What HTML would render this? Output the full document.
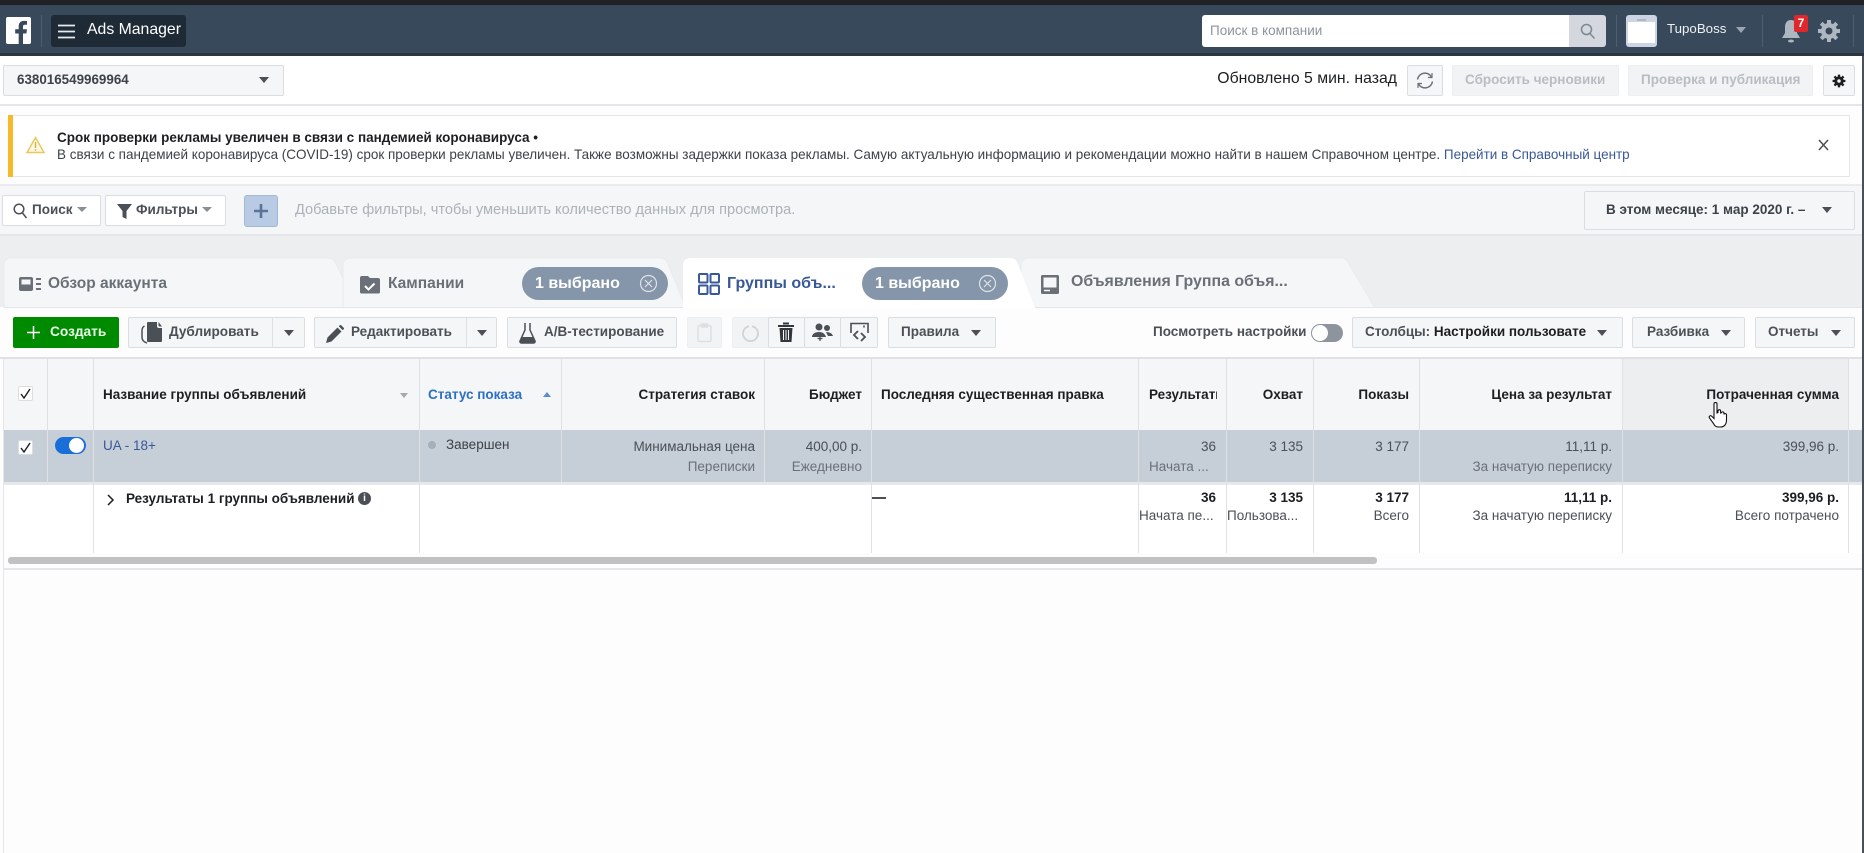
<!DOCTYPE html>
<html lang="ru"><head><meta charset="utf-8"><title>Ads Manager</title>
<style>
html,body{margin:0;padding:0;background:#fdfdfd}
#p{position:relative;width:1864px;height:853px;overflow:hidden;background:#fdfdfd;font-family:"Liberation Sans","Noto Sans CJK SC",sans-serif;font-size:14px;color:#4b4f56}
#p div,#p svg,#p span.a{position:absolute}
.t{white-space:nowrap;line-height:20px;height:20px}
.b{font-weight:bold}
.d{color:#1c1e21}
.g{color:#6b7078}
.btn{background:#f5f6f7;border:1px solid #dadde1;border-radius:2px;box-sizing:border-box}
.w{background:#fff;border:1px solid #dadde1;border-radius:2px;box-sizing:border-box}
.dis{background:#f2f3f5;border:1px solid #eceef0;border-radius:2px;box-sizing:border-box}
.car{width:0;height:0;margin-left:1px;border-left:5px solid transparent;border-right:5px solid transparent;border-top:6px solid #4b4f56}
.v{width:1px;background:#dfe1e5}
.pill{background:#8596aa;border-radius:17px;height:33px;color:#fff;font-weight:bold;font-size:16px;line-height:33px}
</style></head><body>
<div id="p">
<!-- top bars -->
<div style="left:0;top:0;width:1864px;height:5px;background:#1f2124"></div>
<div style="left:0;top:5px;width:1864px;height:49px;background:#37495a"></div>
<div style="left:0;top:53px;width:1864px;height:3px;background:#2b3641"></div>
<svg style="left:6px;top:17px" width="25" height="27" viewBox="0 0 25 27"><rect width="25" height="27" rx="2" fill="#fff"/><path d="M17 27V16.500h3.400l.6-4.200h-4V9.800c0-1.200.4-2 2.100-2H21V4.100c-.4-.1-1.700-.2-3.100-.2-3.100 0-5.200 1.900-5.200 5.300v3.100H9.200v4.200h3.500V27z" fill="#37495a"/></svg>
<div class="v" style="left:41px;top:15px;height:32px;background:#4c5e70"></div>
<div style="left:51px;top:15px;width:135px;height:32px;background:#1e2a36;border-radius:3px"></div>
<svg style="left:58px;top:24px" width="17" height="15"><path d="M0 1.500h17M0 7.500h17M0 13.500h17" stroke="#e6e9ed" stroke-width="1.800"/></svg>
<div class="t" style="left:87px;top:20px;color:#fff;font-size:15.800px">Ads Manager</div>
<!-- search -->
<div style="left:1202px;top:15px;width:371px;height:32px;background:#fff;border-radius:3px 0 0 3px"></div>
<div style="left:1569px;top:15px;width:37px;height:32px;background:#d4d8de;border-radius:0 3px 3px 0"></div>
<svg style="left:1580px;top:23px" width="16" height="17" fill="none" stroke="#7d8895" stroke-width="1.500"><circle cx="6.500" cy="6.500" r="5"/><path d="M10 10.500l4.500 5"/></svg>
<div class="t" style="left:1210px;top:21px;color:#8d949e;font-size:13.500px">Поиск в компании</div>
<div class="v" style="left:1616px;top:15px;height:32px;background:#4c5e70"></div>
<div style="left:1626px;top:15px;width:31px;height:32px;background:#cdd5e3;border-radius:3px"></div>
<div style="left:1628px;top:22px;width:27px;height:21px;background:#fff"></div>
<div style="left:1637px;top:19px;width:9px;height:2px;background:#b0b7c2"></div>
<div class="t" style="left:1667px;top:19px;color:#eef1f4;font-size:13.300px">TupoBoss</div>
<div class="car" style="left:1735px;top:27px;border-top-color:#9aa5b1"></div>
<div class="v" style="left:1762px;top:15px;height:32px;background:#4c5e70"></div>
<svg style="left:1780px;top:18px" width="22" height="26" viewBox="0 0 22 26"><path d="M11 2c4 0 6 3 6 7v6l3 5H2l3-5V9c0-4 2-7 6-7z" fill="#aeb6bf"/><ellipse cx="11" cy="23" rx="3" ry="1.500" fill="#aeb6bf"/></svg>
<div style="left:1794px;top:15px;width:14px;height:17px;background:#e0282c;border-radius:2px;color:#fff;font-size:12px;line-height:17px;text-align:center;font-weight:bold">7</div>
<svg style="left:1817px;top:19px" width="24" height="24" viewBox="0 0 24 24"><path d="M12 4a8 8 0 1 0 0 16 8 8 0 0 0 0-16zm0 4.500a3.500 3.500 0 1 1 0 7 3.500 3.500 0 0 1 0-7z" fill="#aeb6bf" fill-rule="evenodd"/><path d="M12 1v5M12 18v5M1 12h5M18 12h5M4.200 4.200l3.500 3.500M16.300 16.300l3.500 3.500M4.200 19.800l3.500-3.500M16.300 7.700l3.500-3.500" stroke="#aeb6bf" stroke-width="4"/></svg>
<div class="v" style="left:1853px;top:15px;height:32px;background:#4c5e70"></div>

<!-- account row -->
<div style="left:0;top:56px;width:1864px;height:49px;background:#fff"></div>
<div style="left:0;top:104px;width:1864px;height:2px;background:#e4e6ea"></div>
<div class="btn" style="left:3px;top:65px;width:281px;height:31px"></div>
<div class="t b" style="left:17px;top:70px;color:#3d4148;font-size:13.400px">638016549969964</div>
<div class="car" style="left:258px;top:77px"></div>
<div class="t d" style="right:467px;top:69px;font-size:15.800px">Обновлено 5 мин. назад</div>
<div class="btn" style="left:1407px;top:65px;width:36px;height:31px"></div>
<svg style="left:1416px;top:72px" width="18" height="17" fill="none" stroke="#6b7078" stroke-width="1.500"><path d="M15.500 5A7.500 7.500 0 0 0 1.500 7.500M2.500 12A7.500 7.500 0 0 0 16.500 9.500"/><path d="M16 1v4.500h-4M2 16v-4.500h4" stroke-width="1.200"/></svg>
<div class="dis" style="left:1452px;top:65px;width:167px;height:31px"></div>
<div class="t b" style="left:1465px;top:70px;color:#b9bdc3;font-size:13.500px">Сбросить черновики</div>
<div class="dis" style="left:1628px;top:65px;width:185px;height:31px"></div>
<div class="t b" style="left:1641px;top:70px;color:#b9bdc3;font-size:13.500px">Проверка и публикация</div>
<div class="btn" style="left:1823px;top:65px;width:32px;height:31px"></div>
<svg style="left:1832px;top:74px" width="14" height="14" viewBox="0 0 24 24"><path d="M12 4a8 8 0 1 0 0 16 8 8 0 0 0 0-16zm0 5a3 3 0 1 1 0 6 3 3 0 0 1 0-6z" fill="#1c1e21" fill-rule="evenodd"/><path d="M12 1v5M12 18v5M1 12h5M18 12h5M4.200 4.200l3.500 3.500M16.300 16.300l3.500 3.500M4.200 19.800l3.500-3.500M16.300 7.700l3.500-3.500" stroke="#1c1e21" stroke-width="4"/></svg>

<!-- banner -->
<div style="left:0;top:106px;width:1864px;height:78px;background:#fdfdfd"></div>
<div style="left:8px;top:115px;width:1842px;height:62px;background:#fff;border:1px solid #e4e6ea;box-sizing:border-box"></div>
<div style="left:8px;top:115px;width:5px;height:62px;background:#f7b928"></div>
<svg style="left:26px;top:136px" width="19" height="18" fill="none"><path d="M9.500 1.500L18 16.500H1z" stroke="#e8c65a" stroke-width="1.400" fill="#fdf8e4"/><path d="M9.500 6v6M9.500 13.200v1.500" stroke="#d8b03c" stroke-width="1.400"/></svg>
<div class="t b" style="left:57px;top:128px;color:#1c1e21;font-size:13.500px">Срок проверки рекламы увеличен в связи с пандемией коронавируса •</div>
<div class="t" style="left:57px;top:145px;color:#3d4148;font-size:13.480px">В связи с пандемией коронавируса (COVID-19) срок проверки рекламы увеличен. Также возможны задержки показа рекламы. Самую актуальную информацию и рекомендации можно найти в нашем Справочном центре. <span style="color:#385898">Перейти в Справочный центр</span></div>
<svg style="left:1818px;top:139px" width="11" height="12"><path d="M1 1l9 10M10 1L1 11" stroke="#4b4f56" stroke-width="1.500"/></svg>

<!-- filter row -->
<div style="left:0;top:184px;width:1864px;height:52px;background:#f5f6f7;border-top:2px solid #e9ebee;border-bottom:2px solid #e4e6ea;box-sizing:border-box"></div>
<div class="w" style="left:2px;top:195px;width:99px;height:31px"></div>
<svg style="left:13px;top:203px" width="15" height="16" fill="none" stroke="#4b4f56" stroke-width="1.500"><circle cx="6" cy="6" r="4.800"/><path d="M9.500 10l4 5"/></svg>
<div class="t b" style="left:32px;top:200px;color:#4b4f56;font-size:13.500px">Поиск</div>
<div class="car" style="left:76px;top:207px;border-left-width:5px;border-right-width:5px;border-top-width:5px;border-top-color:#8a8f96"></div>
<div class="w" style="left:105px;top:195px;width:121px;height:31px"></div>
<svg style="left:117px;top:204px" width="15" height="15"><path d="M0 0h15L9.500 7v8l-4-2V7z" fill="#4b4f56"/></svg>
<div class="t b" style="left:136px;top:200px;color:#4b4f56;font-size:13.500px">Фильтры</div>
<div class="car" style="left:201px;top:207px;border-left-width:5px;border-right-width:5px;border-top-width:5px;border-top-color:#8a8f96"></div>
<div style="left:244px;top:195px;width:34px;height:32px;background:#b9cbe4;border:1px solid #a4b8d4;border-radius:3px;box-sizing:border-box"></div>
<svg style="left:254px;top:204px" width="14" height="14"><path d="M7 0v14M0 7h14" stroke="#5b7496" stroke-width="2.600"/></svg>
<div class="t" style="left:295px;top:200px;color:#adb1b8;font-size:14.600px">Добавьте фильтры, чтобы уменьшить количество данных для просмотра.</div>
<div class="btn" style="left:1584px;top:191px;width:271px;height:39px"></div>
<div class="t b" style="left:1606px;top:200px;color:#3d4148;font-size:13.500px">В этом месяце: 1 мар 2020 г. –</div>
<div class="car" style="left:1821px;top:207px"></div>

<!-- tabs -->
<div style="left:0;top:236px;width:1864px;height:71px;background:#eceef0"></div>
<svg style="left:0;top:256px" width="1400" height="54" fill="none">
<path d="M4 52V9a7 7 0 0 1 7-7h317c5 0 7 3 8 6l21 44z" fill="#f5f6f7" stroke="#e9ebee"/>
<path d="M343 52V9a7 7 0 0 1 7-7h310c5 0 7 3 8 6l18 44z" fill="#f5f6f7" stroke="#e9ebee"/>
<path d="M1021 52V9a7 7 0 0 1 7-7h313c5 0 7 3 8 6l26 44z" fill="#f5f6f7" stroke="#e9ebee"/>
<path d="M683 52V9a7 7 0 0 1 7-7h320c5 0 7 3 8 6l17 44z" fill="#fff"/>
</svg>
<div style="left:4px;top:307px;width:679px;height:1px;background:#e4e6ea"></div>
<div style="left:1035px;top:307px;width:829px;height:1px;background:#e4e6ea"></div>
<div style="left:0;top:308px;width:1864px;height:49px;background:#fdfdfd"></div>
<svg style="left:19px;top:277px" width="23" height="14"><rect x="0" y="0" width="14" height="14" rx="2" fill="#6b7078"/><rect x="2.500" y="2.500" width="9" height="5" fill="#f5f6f7"/><path d="M17 2h5M17 7h5M17 12h5" stroke="#6b7078" stroke-width="2"/></svg>
<div class="t b" style="left:48px;top:274px;color:#6b7078;font-size:15.500px">Обзор аккаунта</div>
<svg style="left:359px;top:274px" width="22" height="20"><path d="M1 4a2 2 0 0 1 2-2h6l2 2h8a2 2 0 0 1 2 2v12a1.500 1.500 0 0 1-1.500 1.500h-17A1.500 1.500 0 0 1 1 18z" fill="#6b7078"/><path d="M6 12l3.500 3.500 6-6" fill="none" stroke="#fff" stroke-width="2"/></svg>
<div class="t b" style="left:388px;top:274px;color:#6b7078;font-size:15.500px">Кампании</div>
<div class="pill" style="left:522px;top:267px;width:146px"><span class="a" style="left:13px;top:0">1 выбрано</span></div>
<svg style="left:639px;top:274px" width="19" height="19" fill="none" stroke="#dfe3e8" stroke-width="1.200"><circle cx="9.500" cy="9.500" r="8"/><path d="M6 6l7 7M13 6l-7 7"/></svg>
<svg style="left:698px;top:273px" width="22" height="22" fill="none" stroke="#385898" stroke-width="2"><rect x="1" y="1" width="8.500" height="8.500" rx="1"/><rect x="12.500" y="1" width="8.500" height="8.500" rx="1"/><rect x="1" y="12.500" width="8.500" height="8.500" rx="1"/><rect x="12.500" y="12.500" width="8.500" height="8.500" rx="1"/></svg>
<div class="t b" style="left:727px;top:274px;color:#385898;font-size:16px">Группы объ...</div>
<div class="pill" style="left:862px;top:267px;width:146px"><span class="a" style="left:13px;top:0">1 выбрано</span></div>
<svg style="left:978px;top:274px" width="19" height="19" fill="none" stroke="#dfe3e8" stroke-width="1.200"><circle cx="9.500" cy="9.500" r="8"/><path d="M6 6l7 7M13 6l-7 7"/></svg>
<svg style="left:1041px;top:275px" width="18" height="19"><rect width="18" height="19" rx="1.500" fill="#6b7078"/><rect x="2.500" y="2.500" width="13" height="10" fill="#f5f6f7"/><path d="M3 15.500h6" stroke="#f5f6f7" stroke-width="1.500"/></svg>
<div class="t b" style="left:1071px;top:272px;color:#6b7078;font-size:15.900px">Объявления Группа объя...</div>

<!-- toolbar -->
<div style="left:13px;top:317px;width:106px;height:31px;background:#008a00;border-radius:2px"></div>
<svg style="left:27px;top:326px" width="13" height="13"><path d="M6.500 0v13M0 6.500h13" stroke="#fff" stroke-width="1.500"/></svg>
<div class="t b" style="left:50px;top:322px;color:#e8ffe8;font-size:13.700px">Создать</div>
<div class="btn" style="left:128px;top:317px;width:177px;height:31px"></div>
<div class="v" style="left:272px;top:318px;height:29px"></div>
<svg style="left:141px;top:322px" width="22" height="22"><path d="M7 0h9v4a2 2 0 0 0 2 2h3v13a1 1 0 0 1-1 1H7a1 1 0 0 1-1-1V1a1 1 0 0 1 1-1z" fill="#4b4f56"/><path d="M17.500 0v3.500a1 1 0 0 0 1 1H21z" fill="#4b4f56"/><path d="M3.500 4C1.500 5 1 7 1 9v6c0 3 1.500 5 5 6" fill="none" stroke="#4b4f56" stroke-width="1.500"/></svg>
<div class="t b" style="left:169px;top:322px;color:#4b4f56;font-size:13.600px">Дублировать</div>
<div class="car" style="left:283px;top:330px"></div>
<div class="btn" style="left:314px;top:317px;width:183px;height:31px"></div>
<div class="v" style="left:466px;top:318px;height:29px"></div>
<svg style="left:326px;top:325px" width="18" height="18"><path d="M0 18l1.500-5.500L11.500 2.500l4 4L5.500 16.500z" fill="#4b4f56"/><path d="M12.800 1.300l1-1a1 1 0 0 1 1.400 0l2.500 2.500a1 1 0 0 1 0 1.400l-1 1z" fill="#4b4f56"/></svg>
<div class="t b" style="left:351px;top:322px;color:#4b4f56;font-size:13.500px">Редактировать</div>
<div class="car" style="left:476px;top:330px"></div>
<div class="btn" style="left:507px;top:317px;width:170px;height:31px"></div>
<svg style="left:519px;top:322px" width="17" height="22"><path d="M6 1v7L1 19a1.500 1.500 0 0 0 1.500 2h12a1.500 1.500 0 0 0 1.500-2L11 8V1" fill="none" stroke="#4b4f56" stroke-width="1.500"/><path d="M3 15h11l2 5-1 1H2l-1-1z" fill="#4b4f56"/></svg>
<div class="t b" style="left:544px;top:322px;color:#4b4f56;font-size:13.500px">A/B-тестирование</div>
<div class="dis" style="left:687px;top:317px;width:35px;height:31px"></div>
<svg style="left:697px;top:323px" width="15" height="20" fill="none" stroke="#dcdfe3" stroke-width="1.500"><rect x="1" y="2.500" width="13" height="16" rx="1.500"/><rect x="4.500" y="1" width="6" height="3" fill="#dcdfe3"/></svg>
<div class="dis" style="left:732px;top:317px;width:37px;height:31px"></div>
<svg style="left:741px;top:323px" width="19" height="20" fill="none" stroke="#d0d3d8" stroke-width="1.800"><path d="M11 3.200a7.500 7.500 0 1 1-3 0"/></svg>
<div class="btn" style="left:768px;top:317px;width:37px;height:31px"></div>
<svg style="left:778px;top:322px" width="16" height="20" fill="#33373d"><rect x="0" y="3" width="16" height="2"/><rect x="5" y="0.500" width="6" height="2"/><path d="M1.500 6h13l-1 14h-11zM5 8v10h1V8zM7.500 8v10h1V8zM10 8v10h1V8z" fill-rule="evenodd"/></svg>
<div class="btn" style="left:804px;top:317px;width:37px;height:31px"></div>
<svg style="left:812px;top:323px" width="21" height="18" fill="#4b4f56"><circle cx="7" cy="4" r="3.500"/><circle cx="15" cy="5" r="3"/><path d="M0 14c0-3 3-5 7-5s6 2 7 5zM14 9c3 0 6 1 7 4h-5z"/><path d="M8 13v5M5.500 15.500h5" stroke="#4b4f56" stroke-width="1.300"/></svg>
<div class="btn" style="left:840px;top:317px;width:38px;height:31px"></div>
<svg style="left:850px;top:322px" width="19" height="21" fill="none" stroke="#4b4f56" stroke-width="1.600"><path d="M1 11V1.500h17V11M14 3.500v2"/><path d="M8 9l-4 4 4 4M11 11l4 4-4 4" stroke-width="1.800"/></svg>
<div class="btn" style="left:888px;top:317px;width:108px;height:31px"></div>
<div class="t b" style="left:901px;top:322px;color:#4b4f56;font-size:13.500px">Правила</div>
<div class="car" style="left:970px;top:330px"></div>
<div class="t" style="left:1153px;top:322px;color:#4b4f56;font-size:13.500px;font-weight:bold">Посмотреть настройки</div>
<div style="left:1311px;top:324px;width:32px;height:18px;background:#8d949e;border-radius:9px"></div>
<div style="left:1312px;top:325px;width:16px;height:16px;background:#fff;border-radius:8px"></div>
<div class="btn" style="left:1352px;top:317px;width:271px;height:31px"></div>
<div class="t" style="left:1365px;top:322px;color:#4b4f56;font-size:13.500px;font-weight:bold">Столбцы: <span style="color:#1c1e21">Настройки пользовате</span></div>
<div class="car" style="left:1596px;top:330px"></div>
<div class="btn" style="left:1632px;top:317px;width:113px;height:31px"></div>
<div class="t b" style="left:1647px;top:322px;color:#4b4f56;font-size:13.500px">Разбивка</div>
<div class="car" style="left:1720px;top:330px"></div>
<div class="btn" style="left:1755px;top:317px;width:100px;height:31px"></div>
<div class="t b" style="left:1768px;top:322px;color:#4b4f56;font-size:13.500px">Отчеты</div>
<div class="car" style="left:1830px;top:330px"></div>

<!-- table -->
<div style="left:0;top:357px;width:1864px;height:2px;background:#dfe1e5"></div>
<div style="left:4px;top:359px;width:1860px;height:71px;background:#f5f6f7"></div>
<div style="left:1622px;top:359px;width:226px;height:71px;background:#eceef0"></div>
<div style="left:4px;top:430px;width:1860px;height:52px;background:#c6ced8"></div>
<div style="left:4px;top:482px;width:1860px;height:3px;background:#e6e8ec"></div>
<div style="left:4px;top:485px;width:1860px;height:68px;background:#fff"></div>
<!-- col lines -->
<div class="v" style="left:47px;top:359px;height:126px"></div>
<div class="v" style="left:93px;top:359px;height:194px"></div>
<div class="v" style="left:419px;top:359px;height:194px"></div>
<div class="v" style="left:561px;top:359px;height:123px"></div>
<div class="v" style="left:764px;top:359px;height:123px"></div>
<div class="v" style="left:871px;top:359px;height:194px"></div>
<div class="v" style="left:1138px;top:359px;height:194px"></div>
<div class="v" style="left:1226px;top:359px;height:194px"></div>
<div class="v" style="left:1313px;top:359px;height:194px"></div>
<div class="v" style="left:1419px;top:359px;height:194px"></div>
<div class="v" style="left:1622px;top:359px;height:194px"></div>
<div class="v" style="left:1848px;top:359px;height:194px"></div>
<div class="v" style="left:3px;top:359px;height:494px;background:#e4e6ea"></div>
<!-- header -->
<div class="w" style="left:18px;top:386px;width:15px;height:15px"></div>
<svg style="left:20px;top:388px" width="11" height="11" fill="none" stroke="#1c1e21" stroke-width="1.400"><path d="M1 6l3 4 6-9"/></svg>
<div class="t b d" style="left:103px;top:385px;font-size:13.500px">Название группы объявлений</div>
<div class="car" style="left:399px;top:393px;border-left-width:4px;border-right-width:4px;border-top-width:5px;border-top-color:#a5a9af"></div>
<div class="t b" style="left:428px;top:385px;color:#2d6fc4;font-size:13.500px">Статус показа</div>
<div style="left:543px;top:392px;width:0;height:0;border-left:4px solid transparent;border-right:4px solid transparent;border-bottom:5px solid #5b8bd0"></div>
<div class="t b d" style="right:1109px;top:385px;font-size:13.500px">Стратегия ставок</div>
<div class="t b d" style="right:1002px;top:385px;font-size:13.500px">Бюджет</div>
<div class="t b d" style="left:881px;top:385px;font-size:13.500px">Последняя существенная правка</div>
<div class="t b d" style="left:1149px;top:385px;width:68px;overflow:hidden;font-size:13.500px">Результаты</div>
<div class="t b d" style="right:561px;top:385px;font-size:13.500px">Охват</div>
<div class="t b d" style="right:455px;top:385px;font-size:13.500px">Показы</div>
<div class="t b d" style="right:252px;top:385px;font-size:13.500px">Цена за результат</div>
<div class="t b d" style="right:25px;top:385px;font-size:13.500px">Потраченная сумма</div>
<!-- row 1 -->
<div class="w" style="left:18px;top:440px;width:15px;height:15px"></div>
<svg style="left:20px;top:442px" width="11" height="11" fill="none" stroke="#1c1e21" stroke-width="1.400"><path d="M1 6l3 4 6-9"/></svg>
<div style="left:55px;top:437px;width:31px;height:17px;background:#1a6ed8;border-radius:9px"></div>
<div style="left:69px;top:438px;width:15px;height:15px;background:#fff;border-radius:8px"></div>
<div class="t" style="left:103px;top:436px;color:#385898;font-size:13.500px">UA - 18+</div>
<div style="left:428px;top:441px;width:8px;height:8px;border-radius:4px;background:#a6aeb8"></div>
<div class="t" style="left:446px;top:435px;color:#3d4148;font-size:13.500px">Завершен</div>
<div class="t" style="right:1109px;top:437px;font-size:13.500px">Минимальная цена</div>
<div class="t g" style="right:1109px;top:457px;font-size:13.500px">Переписки</div>
<div class="t" style="right:1002px;top:437px;font-size:13.500px">400,00 р.</div>
<div class="t g" style="right:1002px;top:457px;font-size:13.500px">Ежедневно</div>
<div class="t" style="right:648px;top:437px;font-size:13.500px">36</div>
<div class="t g" style="left:1149px;top:457px;font-size:13.500px">Начата ...</div>
<div class="t" style="right:561px;top:437px;font-size:13.500px">3 135</div>
<div class="t" style="right:455px;top:437px;font-size:13.500px">3 177</div>
<div class="t" style="right:252px;top:437px;font-size:13.500px">11,11 р.</div>
<div class="t g" style="right:252px;top:457px;font-size:13.500px">За начатую переписку</div>
<div class="t" style="right:25px;top:437px;font-size:13.500px">399,96 р.</div>
<!-- summary -->
<svg style="left:106px;top:493px" width="9" height="14" fill="none" stroke="#1c1e21" stroke-width="1.500"><path d="M2 2l5 5-5 5"/></svg>
<div class="t b d" style="left:126px;top:489px;font-size:13.500px">Результаты 1 группы объявлений</div>
<div style="left:358px;top:492px;width:13px;height:13px;border-radius:7px;background:#4b4f56;color:#fff;font-size:10px;line-height:13px;text-align:center;font-weight:bold">i</div>
<div style="left:872px;top:497px;width:14px;height:2px;background:#4b4f56"></div>
<div class="t b d" style="right:648px;top:488px;font-size:13.500px">36</div>
<div class="t" style="left:1139px;top:506px;font-size:13.500px">Начата пе...</div>
<div class="t b d" style="right:561px;top:488px;font-size:13.500px">3 135</div>
<div class="t" style="left:1227px;top:506px;font-size:13.500px">Пользова...</div>
<div class="t b d" style="right:455px;top:488px;font-size:13.500px">3 177</div>
<div class="t" style="right:455px;top:506px;font-size:13.500px">Всего</div>
<div class="t b d" style="right:252px;top:488px;font-size:13.500px">11,11 р.</div>
<div class="t" style="right:252px;top:506px;font-size:13.500px">За начатую переписку</div>
<div class="t b d" style="right:25px;top:488px;font-size:13.500px">399,96 р.</div>
<div class="t" style="right:25px;top:506px;font-size:13.500px">Всего потрачено</div>
<!-- scrollbar -->
<div style="left:8px;top:557px;width:1369px;height:7px;background:#c1c1c1;border-radius:3px"></div>
<div style="left:4px;top:568px;width:1860px;height:2px;background:#e4e6ea"></div>
<!-- right border -->
<div style="left:1862px;top:56px;width:2px;height:797px;background:#4a5058"></div>
<!-- cursor -->
<svg style="left:1708px;top:402px" width="20" height="26" viewBox="0 0 20 26"><path d="M6 2a1.500 1.500 0 0 1 3 0v9l1-.5V9a1.300 1.300 0 0 1 2.600 0v2l.9-.3a1.300 1.300 0 0 1 2.500.3v1.500a1.300 1.300 0 0 1 2.500 0V18c0 4-2 7-6 7h-2c-3 0-4-1.500-5-3.500L1.500 16c-1-2 1-3 2.500-1.500L6 16.500z" fill="#fff" stroke="#111" stroke-width="1.100"/></svg>
</div>
</body></html>
